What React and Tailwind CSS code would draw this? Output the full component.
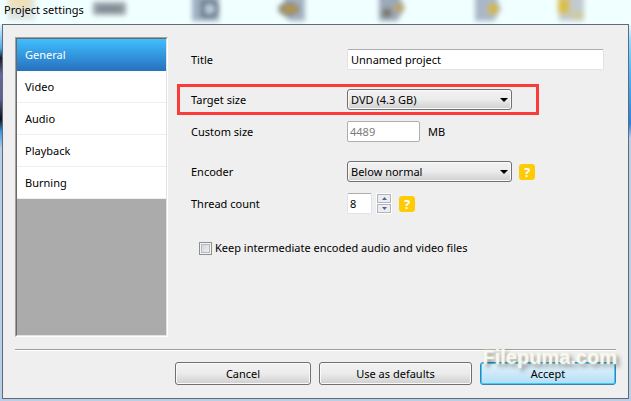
import React, { useState } from 'react';

const tabs = ['General', 'Video', 'Audio', 'Playback', 'Burning'];

const Label = ({ htmlFor, children }) => (
    <label htmlFor={htmlFor} className="w-[156px] shrink-0">
        {children}
    </label>
);

const Select = ({ id, options }) => (
    <div className="relative w-[165px] shrink-0">
        <select
            id={id}
            className="block w-full h-[21px] appearance-none rounded-[3px] border border-[#707070] bg-linear-to-b from-[#f2f2f2] from-0% via-[#ebebeb] via-50% to-[#cfcfcf] pl-[3px] pr-5 leading-[19px] text-black shadow-[inset_0_0_0_1px_#fafafa] outline-none"
        >
            {options.map((option) => (
                <option key={option}>{option}</option>
            ))}
        </select>
        <svg className="pointer-events-none absolute right-1 top-[9px]" width="8" height="4" viewBox="0 0 8 4">
            <path d="M0 0h8L4 4z" fill="#000" />
        </svg>
    </div>
);

const Help = ({ label }) => (
    <button
        type="button"
        aria-label={label}
        className="ml-[7px] flex size-4 shrink-0 items-center justify-center rounded-[3px] bg-[#ffcb05] text-[13px] font-bold leading-4 text-white"
    >
        ?
    </button>
);

const Spinner = () => (
    <div className="ml-1 flex h-[21px] w-4 flex-col gap-px bg-white p-px">
        <button type="button" aria-label="Increase" className="flex flex-1 items-center justify-center border border-[#b4b4bc] bg-[#ededf0]">
            <svg width="5" height="3" viewBox="0 0 5 3"><path d="M0 3h5L2.5 0z" fill="#4a64a8" /></svg>
        </button>
        <button type="button" aria-label="Decrease" className="flex flex-1 items-center justify-center border border-[#b4b4bc] bg-[#ededf0]">
            <svg width="5" height="3" viewBox="0 0 5 3"><path d="M0 0h5L2.5 3z" fill="#4a64a8" /></svg>
        </button>
    </div>
);

// Toolbar icons of the window behind, seen through the glass frame
const GlassBackdrop = () => (
    <svg className="absolute left-0 top-0" width="631" height="24" viewBox="0 0 631 24" aria-hidden="true">
        <defs>
            <filter id="glass" x="-10%" y="-60%" width="120%" height="220%">
                <feGaussianBlur stdDeviation="2.6" />
            </filter>
        </defs>
        <g filter="url(#glass)">
            <path d="M8 -6h27v26H8z" fill="#dfe5e2" />
            <path d="M9 -6h22v14H9z" fill="#eee0b8" />
            <rect x="93" y="2" width="33" height="13" rx="2" fill="#98a2aa" />
            <path d="M98 9h23" stroke="#757e86" strokeWidth="4" />
            <path d="M192 -6h27v27h-27z" fill="#9fb0c1" />
            <path d="M203 2h8q6 0 6 7t-6 7h-8z" stroke="#5f6d7c" strokeWidth="4" fill="#b9cbdc" />
            <path d="M284 -6h21v27h-15l-6-5z" fill="#a5b3c1" />
            <ellipse cx="289" cy="9" rx="11" ry="7" fill="#84877c" />
            <path d="M283 9h14" stroke="#b99a35" strokeWidth="6" />
            <path d="M379 -6h19l7 14-8 13h-18z" fill="#9ba9b8" />
            <circle cx="387" cy="13" r="5" fill="#7d766b" />
            <circle cx="399" cy="8" r="5" fill="#bba468" />
            <path d="M475 -6h20l6 15-7 12h-19z" fill="#a9b8c8" />
            <circle cx="493" cy="9" r="6" fill="#d0b844" />
            <path d="M559 -6h25v27h-25z" fill="#c2cad0" />
            <path d="M558 -2h12v16h-12z" fill="#d8bf4c" />
            <path d="M572 12h11v7h-11z" fill="#d0cb94" />
        </g>
    </svg>
);

const buttonStyle =
    'h-[23px] rounded-[3px] border border-[#707070] bg-linear-to-b from-[#f2f2f2] from-0% via-[#ebebeb] via-50% to-[#cfcfcf] shadow-[inset_0_0_0_1px_#fafafa]';

const App = () => {
    const [activeTab, setActiveTab] = useState('General');

    return (
        <div className="flex min-h-screen flex-col bg-[#b9cfe8] font-['Noto_Sans','Open_Sans',sans-serif] text-[11px] leading-4 text-black">
            <header className="relative h-6 overflow-hidden bg-[#f0ffff] pl-1">
                <GlassBackdrop />
                <h1 className="relative pt-[2px]">Project settings</h1>
            </header>

            <div className="flex flex-1 pb-[2px]">
                <div className="w-[2px] shrink-0 bg-[linear-gradient(#e4f4fa_0px,#49aef0_24px,#1b1b28_34px,#66669a_50px,#5c5f90_75px,#101018_95px,#3b9be4_108px,#b9cfe8_125px)]" />
                <form
                    onSubmit={(e) => e.preventDefault()}
                    className="flex min-w-0 flex-1 flex-col border border-[#5f6b78] bg-[#efefef] px-3 pb-[13px] pt-3"
                >
                    <div className="flex flex-1">
                        <nav className="flex w-[153px] shrink-0 border border-b-white border-l-[#a0a0a0] border-r-white border-t-[#a0a0a0]">
                            <div className="flex flex-1 flex-col border border-b-[#e3e3e3] border-l-[#696969] border-r-[#e3e3e3] border-t-[#696969] bg-[#ababab]">
                                {tabs.map((tab) => (
                                    <button
                                        key={tab}
                                        type="button"
                                        onClick={() => setActiveTab(tab)}
                                        className={`h-8 border-b px-2 text-left ${
                                            tab === activeTab
                                                ? 'border-[#2873bf] bg-linear-to-b from-[#40bfff] to-[#2873bf] text-white'
                                                : 'border-[#efefef] bg-white'
                                        }`}
                                    >
                                        {tab}
                                    </button>
                                ))}
                            </div>
                        </nav>

                        <div className="flex min-w-0 flex-1 flex-col pl-[23px] pr-3 pt-3">
                            <div className="flex h-[21px] items-center">
                                <Label htmlFor="title">Title</Label>
                                <input
                                    id="title"
                                    defaultValue="Unnamed project"
                                    className="h-[21px] min-w-0 flex-1 rounded-[2px] border border-[#e2e3ea] border-t-[#abadb3] bg-white px-[3px] outline-none"
                                />
                            </div>

                            <div className="relative mt-[19px] flex h-[21px] items-center">
                                <Label htmlFor="target">Target size</Label>
                                <Select id="target" options={['DVD (4.3 GB)', 'DVD DL (7.9 GB)']} />
                                <div className="pointer-events-none absolute -inset-y-[5px] -left-[14px] w-[362px] border-3 border-[#fb3a3a]" />
                            </div>

                            <div className="mt-[11px] flex h-[21px] items-center">
                                <Label htmlFor="custom">Custom size</Label>
                                <input
                                    id="custom"
                                    disabled
                                    defaultValue="4489"
                                    className="h-[21px] w-[73px] rounded-[2px] border border-[#afafaf] bg-white px-[2px] text-[#7b7b7b]"
                                />
                                <span className="ml-2">MB</span>
                            </div>

                            <div className="mt-[19px] flex h-[21px] items-center">
                                <Label htmlFor="encoder">Encoder</Label>
                                <Select id="encoder" options={['Below normal', 'Normal', 'Above normal']} />
                                <Help label="Encoder help" />
                            </div>

                            <div className="mt-[11px] flex h-[21px] items-center">
                                <Label htmlFor="threads">Thread count</Label>
                                <input
                                    id="threads"
                                    defaultValue="8"
                                    className="h-[21px] w-[25px] rounded-[2px] border border-[#e2e3ea] border-t-[#abadb3] bg-white px-[2px] outline-none"
                                />
                                <Spinner />
                                <Help label="Thread count help" />
                            </div>

                            <label className="ml-2 mt-[26px] flex items-center gap-[3px]">
                                <input
                                    type="checkbox"
                                    className="size-[13px] shrink-0 appearance-none border border-[#8e8f8f] bg-linear-to-br from-[#cbcfd5] to-[#f6f6f6] shadow-[inset_0_0_0_1px_#f4f4f4,inset_0_0_0_2px_#b5b9bd] checked:bg-[#4a64a8]"
                                />
                                Keep intermediate encoded audio and video files
                            </label>
                        </div>
                    </div>

                    <footer className="relative mt-3 flex justify-end gap-2 border-t border-[#a0a0a0] pt-3 shadow-[inset_0_1px_0_#fff]">
                        <button type="button" className={`${buttonStyle} w-[136px]`}>Cancel</button>
                        <button type="button" className={`${buttonStyle} w-[153px]`}>Use as defaults</button>
                        <button
                            type="submit"
                            className="h-[23px] w-[136px] rounded-[3px] border border-[#3c7fb1] bg-linear-to-b from-[#e6f5fd] to-[#b4ddf5] shadow-[inset_0_0_0_1px_#35d0fa]"
                        >
                            Accept
                        </button>
                        <span className="pointer-events-none absolute -right-[1px] -top-[5px] font-['Liberation_Sans',sans-serif] text-[20px] font-bold leading-6 text-[#fafaf6]/85 [text-shadow:0_0_2px_#f4f4dc,3px_3px_4px_rgba(70,70,60,0.6)]">
                            Filepuma.com
                        </span>
                    </footer>
                </form>
                <div className="w-[2px] shrink-0 bg-[linear-gradient(#e8fbff_0px,#8fd8ff_18px,#4cb4f8_50px,#2a80dc_100px,#b9cfe8_114px)]" />
            </div>
        </div>
    );
};

export default App;
